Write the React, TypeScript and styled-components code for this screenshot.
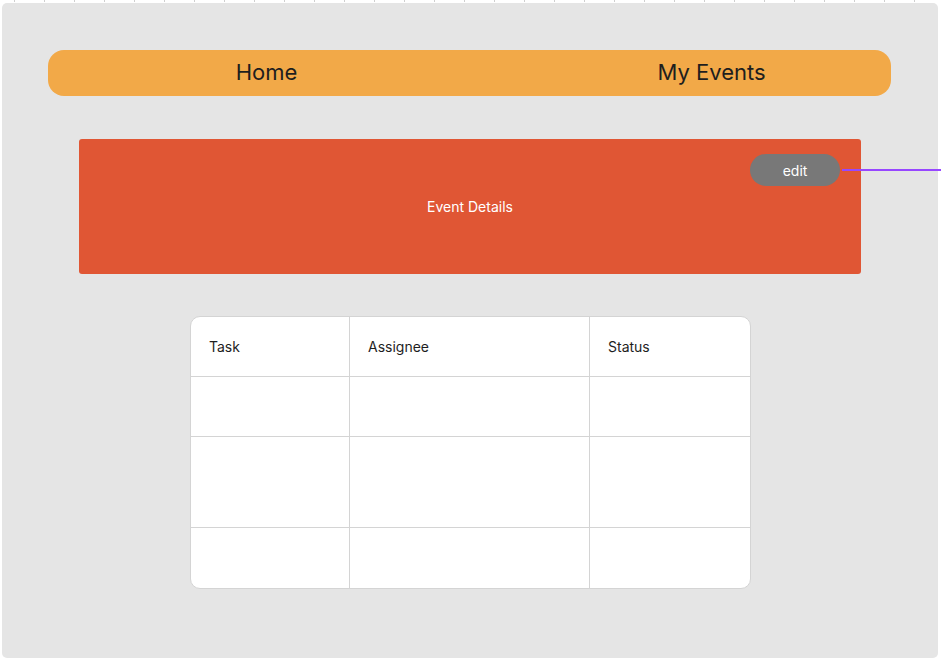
import React from "react";
import styled, { createGlobalStyle } from "styled-components";

const Global = createGlobalStyle`
  html, body { margin: 0; padding: 0; background: #ffffff; }
  body { font-family: Inter, "Noto Sans", sans-serif; width: 941px; height: 661px; overflow: hidden; }
  * { box-sizing: border-box; }
`;

const Page = styled.div`
  position: relative;
  width: 941px;
  height: 661px;
  padding: 3px 3px 3px 2px;
`;

const Ruler = styled.div`
  position: absolute;
  left: 0;
  top: 0;
  width: 941px;
  height: 2px;
  background-image: linear-gradient(to right, transparent 0 14px, #cfcfcf 14px 15px, transparent 15px 30px);
  background-size: 30px 2px;
`;

const Frame = styled.div`
  width: 936px;
  height: 655px;
  background: #e5e5e5;
  border-radius: 5px;
  display: flex;
  flex-direction: column;
  padding-top: 47px;
`;

const Nav = styled.nav`
  margin-left: 46px;
  width: 843px;
  height: 46px;
  background: #f2a948;
  border-radius: 16px;
  display: flex;
  align-items: center;
  padding-left: 158px;
  padding-bottom: 3px;
  gap: 324px;
`;

const NavItem = styled.span`
  width: 121px;
  text-align: center;
  font-size: 22px;
  color: #1e1e1e;
  line-height: 1;
`;

const Card = styled.section`
  margin: 43px 0 0 77px;
  width: 782px;
  height: 135px;
  background: #e05634;
  border-radius: 3px;
  display: grid;
  grid-template-rows: 44px 1fr;
  padding: 15px 21px 0 0;
`;

const CardTop = styled.div`
  display: flex;
  justify-content: flex-end;
`;

const EditButton = styled.button`
  position: relative;
  width: 90px;
  height: 32px;
  border: none;
  border-radius: 16px;
  background: #787878;
  color: #ffffff;
  font-family: Inter, "Noto Sans", sans-serif;
  font-size: 14px;
  padding: 0;
  &::after {
    content: "";
    position: absolute;
    left: calc(100% + 2px);
    top: 15px;
    width: 110px;
    height: 2px;
    background: #9747ff;
  }
`;

const CardTitle = styled.div`
  color: #ffffff;
  font-size: 14px;
  line-height: 17px;
  text-align: center;
  padding-left: 21px;
`;

const Table = styled.div`
  margin: 42px 0 0 188px;
  width: 561px;
  border: 1px solid #d4d4d4;
  border-radius: 10px;
  background: #ffffff;
  overflow: hidden;
  display: grid;
  grid-template-columns: 159px 240px 1fr;
`;

const Cell = styled.div<{ $h: number; $last?: boolean; $lastRow?: boolean }>`
  height: ${(p) => p.$h}px;
  border-right: ${(p) => (p.$last ? "none" : "1px solid #d4d4d4")};
  border-bottom: ${(p) => (p.$lastRow ? "none" : "1px solid #d4d4d4")};
  display: flex;
  align-items: center;
  padding-left: 18px;
  font-size: 14px;
  color: #1e1e1e;
`;

const heads = ["Task", "Assignee", "Status"];
const rows = [60, 60, 91, 60];

export default function App() {
  return (
    <>
      <Global />
      <Page>
        <Ruler />
        <Frame>
          <Nav>
            <NavItem>Home</NavItem>
            <NavItem>My Events</NavItem>
          </Nav>
          <Card>
            <CardTop>
              <EditButton>edit</EditButton>
            </CardTop>
            <CardTitle>Event Details</CardTitle>
          </Card>
          <Table>
            {rows.map((h, r) =>
              [0, 1, 2].map((c) => (
                <Cell key={`${r}-${c}`} $h={h} $last={c === 2} $lastRow={r === rows.length - 1}>
                  {r === 0 ? heads[c] : null}
                </Cell>
              ))
            )}
          </Table>
        </Frame>
      </Page>
    </>
  );
}
